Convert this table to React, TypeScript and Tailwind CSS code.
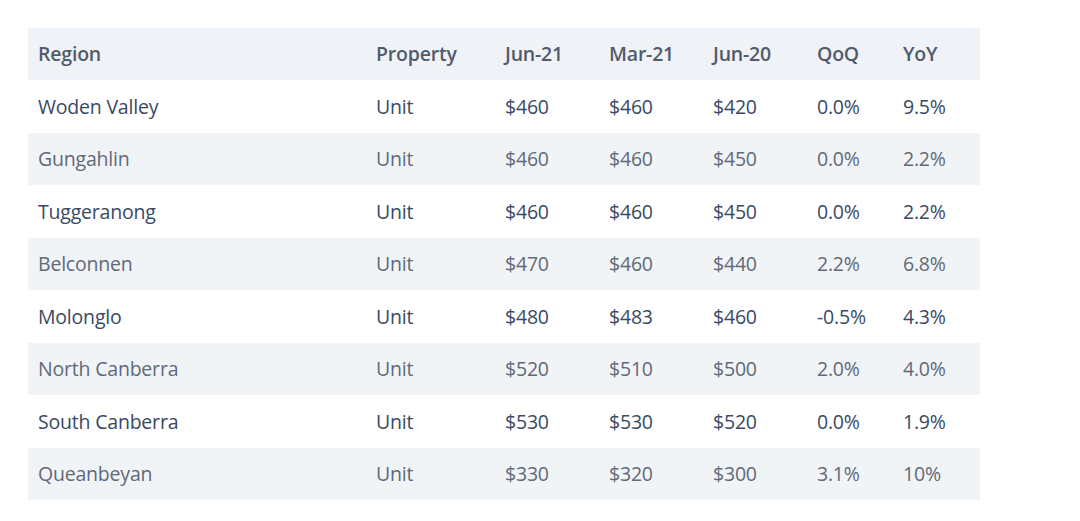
import React from "react";

const rows = [
  ["Woden Valley", "Unit", "$460", "$460", "$420", "0.0%", "9.5%"],
  ["Gungahlin", "Unit", "$460", "$460", "$450", "0.0%", "2.2%"],
  ["Tuggeranong", "Unit", "$460", "$460", "$450", "0.0%", "2.2%"],
  ["Belconnen", "Unit", "$470", "$460", "$440", "2.2%", "6.8%"],
  ["Molonglo", "Unit", "$480", "$483", "$460", "-0.5%", "4.3%"],
  ["North Canberra", "Unit", "$520", "$510", "$500", "2.0%", "4.0%"],
  ["South Canberra", "Unit", "$530", "$530", "$520", "0.0%", "1.9%"],
  ["Queanbeyan", "Unit", "$330", "$320", "$300", "3.1%", "10%"],
];
const headers = ["Region", "Property", "Jun-21", "Mar-21", "Jun-20", "QoQ", "YoY"];
const cols = "grid grid-cols-[338px_129px_104px_104px_104px_86px_87px]";

export default function App() {
  return (
    <div className="w-[1080px] h-[521px] bg-white pt-[28px] pl-[28px] font-['Open_Sans','Liberation_Sans',sans-serif] text-[19.5px] tracking-[-0.2px]">
      <div className="w-[952px]">
        <div className={`${cols} h-[52px] items-center bg-[#eff2f6] font-semibold text-[#525b6c]`}>
          {headers.map((h) => (
            <div key={h} className="pl-[10px]">{h}</div>
          ))}
        </div>
        {rows.map((r, i) => (
          <div
            key={r[0]}
            className={`${cols} h-[52.5px] items-center ${
              i % 2 === 0 ? "bg-white text-[#3a4963] font-medium" : "bg-[#f1f4f7] text-[#616977]"
            }`}
          >
            {r.map((c, j) => (
              <div key={j} className="pl-[10px]">{c}</div>
            ))}
          </div>
        ))}
      </div>
    </div>
  );
}
